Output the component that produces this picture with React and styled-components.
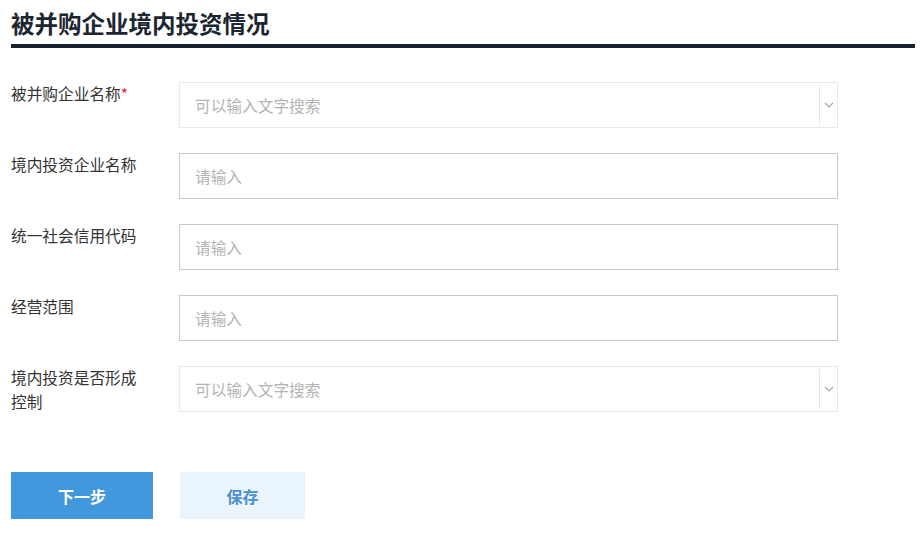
import React from "react";
import styled, { createGlobalStyle } from "styled-components";

const GlobalStyle = createGlobalStyle`
  body {
    margin: 0;
    background: #fff;
    font-family: "Noto Sans CJK SC", "Noto Sans", sans-serif;
  }
`;

const Page = styled.div`
  padding: 7px 0 0 11px;
  width: 904px;
`;

const Title = styled.h2`
  margin: 0;
  font-size: 23.5px;
  line-height: 32px;
  font-weight: 700;
  color: #1b2631;
`;

const TitleRule = styled.div`
  height: 4px;
  margin-top: 5px;
  background-color: #16222e;
`;

const Form = styled.div`
  display: flex;
  flex-direction: column;
  gap: 25px;
  margin-top: 34px;
`;

const Row = styled.div`
  display: flex;
  align-items: flex-start;
`;

const Label = styled.div`
  width: 168px;
  padding-right: 30px;
  box-sizing: border-box;
  font-size: 15.7px;
  line-height: 24px;
  color: #333;
`;

const Required = styled.span`
  color: #e0323f;
`;

const Field = styled.div`
  width: 659px;
  height: 46px;
  box-sizing: border-box;
  display: flex;
  align-items: center;
  border: 1px solid ${(props) => (props.$select ? "#e8e8e8" : "#c9c9c9")};
  background: #fff;
`;

const Placeholder = styled.span`
  flex: 1;
  padding-left: 15px;
  font-size: 15.7px;
  color: #b4b4b4;
`;

const Arrow = styled.div`
  width: 17px;
  height: 40px;
  border-left: 1px solid #e6e6e6;
  display: flex;
  align-items: center;
  justify-content: center;
`;

const Actions = styled.div`
  display: flex;
  gap: 27px;
  margin-top: 58px;
`;

const Button = styled.button`
  width: ${(props) => (props.$primary ? "142px" : "125px")};
  height: 47px;
  border: none;
  font-family: inherit;
  font-size: 16px;
  font-weight: 700;
  cursor: pointer;
  background-color: ${(props) => (props.$primary ? "#4298dc" : "#eaf4fc")};
  color: ${(props) => (props.$primary ? "#fff" : "#4b8fd2")};
`;

const fields = [
  { label: "被并购企业名称", required: true, select: true },
  { label: "境内投资企业名称" },
  { label: "统一社会信用代码" },
  { label: "经营范围" },
  { label: "境内投资是否形成控制", select: true },
];

const App = () => (
  <Page>
    <GlobalStyle />
    <Title>被并购企业境内投资情况</Title>
    <TitleRule />
    <Form>
      {fields.map((f) => (
        <Row key={f.label}>
          <Label>
            {f.label}
            {f.required && <Required>*</Required>}
          </Label>
          <Field $select={f.select}>
            <Placeholder>{f.select ? "可以输入文字搜索" : "请输入"}</Placeholder>
            {f.select && (
              <Arrow>
                <svg width="10" height="6" viewBox="0 0 10 6">
                  <path d="M1 1l4 4l4-4" fill="none" stroke="#a6a6a6" strokeWidth="1.2" />
                </svg>
              </Arrow>
            )}
          </Field>
        </Row>
      ))}
    </Form>
    <Actions>
      <Button $primary>下一步</Button>
      <Button>保存</Button>
    </Actions>
  </Page>
);

export default App;
